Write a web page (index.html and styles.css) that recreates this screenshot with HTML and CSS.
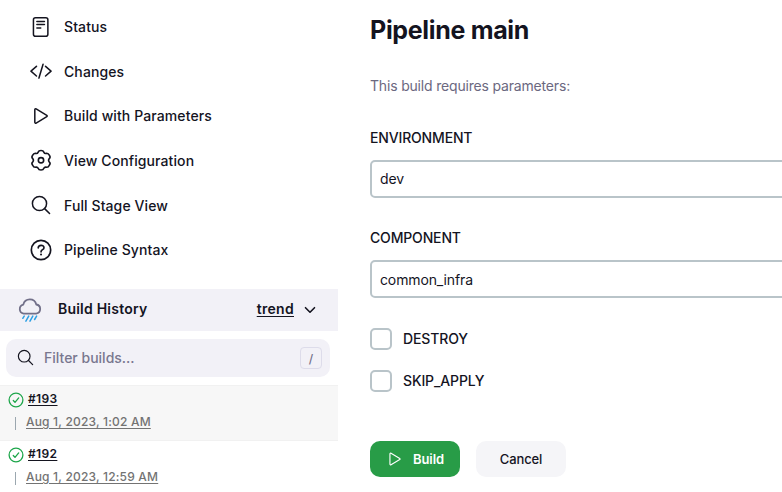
FILE: index.html
```html
<!DOCTYPE html>
<html lang="en">
<head>
<meta charset="utf-8">
<title>Pipeline main</title>
<link rel="stylesheet" href="styles.css">
</head>
<body>
<div class="page">
  <aside class="sidebar">
    <nav class="tasks">
      <a class="task"><svg class="icon" viewBox="0 0 512 512"><rect x="80" y="40" width="336" height="430" rx="48"/><path d="M160 128h176M160 200h176M160 280h90"/></svg><span>Status</span></a>
      <a class="task"><svg class="icon" viewBox="0 0 512 512"><path d="M150 372L22 260l128-112M362 372l128-112-128-112M304 100l-96 320"/></svg><span>Changes</span></a>
      <a class="task"><svg class="icon" viewBox="0 0 512 512"><path d="M112 111v290c0 17.440 17 28.520 31 20.160l247.900-148.370c12.120-7.250 12.120-26.330 0-33.580L143 90.840c-14-8.360-31 2.720-31 20.160z"/></svg><span>Build with Parameters</span></a>
      <a class="task"><svg class="icon gear" viewBox="0 0 512 512"><circle cx="256" cy="262" r="62"/><path d="M256 36Q312 36 320 72Q344 118 390 98Q430 98 450 146Q486 194 446 227Q420 262 446 297Q486 330 450 378Q430 426 390 426Q344 406 320 452Q312 488 256 488Q200 488 192 452Q168 406 122 426Q82 426 62 378Q26 330 66 297Q92 262 66 227Q26 194 62 146Q82 98 122 98Q168 118 192 72Q200 36 256 36z"/></svg><span>View Configuration</span></a>
      <a class="task"><svg class="icon" viewBox="0 0 512 512"><circle cx="221" cy="221" r="165"/><path d="M340 340l115 115"/></svg><span>Full Stage View</span></a>
      <a class="task"><svg class="icon bold" viewBox="0 0 512 512"><circle cx="256" cy="256" r="225"/><path d="M192 205c0-76 133-78 133-4 0 48-68 47-68 98"/><circle class="dot" cx="257" cy="360" r="24"/></svg><span>Pipeline Syntax</span></a>
    </nav>

    <header class="history-head">
      <svg class="weather" viewBox="0 0 24 24"><path class="cloud" d="M5.600 15.600a4.600 4.600 0 0 1-.3-9 6.700 6.700 0 0 1 13-.1 4.600 4.600 0 0 1-.1 9.100z"/><path class="rain" d="M6.200 18.100l-1.400 2.200M10.700 18.100l-2.800 5M14.800 18.100l-2.800 5M18.600 18.100L16.600 21.500"/></svg>
      <strong>Build History</strong>
      <a class="trend">trend</a>
      <svg class="chevron" viewBox="0 0 12 12"><path d="M1.500 3.700l4.500 4.500 4.500-4.500"/></svg>
    </header>

    <div class="search">
      <svg class="search-icon" viewBox="0 0 512 512"><circle cx="221" cy="221" r="157"/><path d="M338 338l110 110"/></svg>
      <span class="hint">Filter builds...</span>
      <kbd>/</kbd>
    </div>

    <ul class="builds">
      <li class="build">
        <div class="build-top"><svg class="ok" viewBox="0 0 16 16"><circle cx="8" cy="8" r="6.900"/><path d="M5.300 8.500l1.700 1.900 3.700-4.500"/></svg><a class="number">#193</a></div>
        <div class="build-time"><a>Aug 1, 2023, 1:02 AM</a></div>
      </li>
      <li class="build">
        <div class="build-top"><svg class="ok" viewBox="0 0 16 16"><circle cx="8" cy="8" r="6.900"/><path d="M5.300 8.500l1.700 1.900 3.700-4.500"/></svg><a class="number">#192</a></div>
        <div class="build-time"><a>Aug 1, 2023, 12:59 AM</a></div>
      </li>
    </ul>
  </aside>

  <main class="main">
    <h1>Pipeline main</h1>
    <p class="intro">This build requires parameters:</p>
    <div class="field">
      <div class="label">ENVIRONMENT</div>
      <div class="input env">dev</div>
    </div>
    <div class="field">
      <div class="label">COMPONENT</div>
      <div class="input">common_infra</div>
    </div>
    <div class="check"><span class="box"></span><span class="check-label">DESTROY</span></div>
    <div class="check"><span class="box"></span><span class="check-label">SKIP_APPLY</span></div>
    <div class="actions">
      <button class="btn primary"><svg class="play" viewBox="0 0 512 512"><path d="M112 111v290c0 17.440 17 28.520 31 20.160l247.900-148.370c12.120-7.250 12.120-26.330 0-33.580L143 90.840c-14-8.360-31 2.720-31 20.160z"/></svg><span>Build</span></button>
      <button class="btn"><span>Cancel</span></button>
    </div>
  </main>
</div>
</body>
</html>
```
FILE: styles.css
```css
* { box-sizing: border-box; }

body {
  margin: 0;
  background: #fff;
  color: #14141f;
  font-family: Inter, "Liberation Sans", sans-serif;
  font-size: 14px;
  overflow: hidden;
}

svg {
  display: block;
  flex: none;
  fill: none;
  stroke: currentColor;
  stroke-linecap: round;
  stroke-linejoin: round;
}

.page {
  display: flex;
  height: 492px;
  overflow: hidden;
}

.sidebar {
  flex: none;
  width: 338px;
}

.tasks {
  display: flex;
  flex-direction: column;
  height: 289px;
  padding-top: 4.400px;
}

.task {
  display: flex;
  align-items: center;
  gap: 13px;
  height: 44.600px;
  padding-left: 30px;
  font-size: 14px;
  font-weight: 500;
  letter-spacing: 0.1px;
}

.icon {
  width: 22px;
  height: 22px;
  margin-right: -1px;
  stroke-width: 35;
}

.bold { stroke-width: 39; }
.gear { stroke-width: 38; }
.dot { fill: currentColor; stroke: none; }

.history-head {
  display: flex;
  align-items: center;
  height: 42px;
  padding: 0 22px 0 18px;
  background: #f2f1f7;
  font-weight: 600;
  letter-spacing: 0.22px;
}

.history-head strong { padding-bottom: 3px; font-weight: 600; }
.weather { width: 24px; height: 24px; margin-right: 16px; }
.cloud { stroke: #727089; stroke-width: 1.800; }
.rain { stroke: #2da0e5; stroke-width: 1.500; }

.trend {
  margin-left: auto;
  padding-bottom: 3px;
  letter-spacing: 0.3px;
  text-decoration: underline;
  text-underline-offset: 2px;
}

.chevron { width: 12px; height: 12px; margin-left: 10px; stroke-width: 1.600; }

.search {
  display: flex;
  align-items: center;
  height: 38px;
  margin: 8px 8px 8px 6px;
  padding: 0 8px 0 10px;
  border-radius: 10px;
  background: #f2f1f7;
}

.search-icon { width: 19px; height: 19px; margin-bottom: 2px; stroke-width: 32; }
.hint { margin-left: 9px; padding-bottom: 2px; color: #79778f; font-weight: 500; }

kbd {
  display: flex;
  align-items: center;
  justify-content: center;
  width: 22px;
  height: 22px;
  margin-left: auto;
  border: 1px solid #dddcea;
  border-radius: 4px;
  color: #727089;
  font: 500 12px Inter, sans-serif;
}

.builds { margin: 0; padding: 0; list-style: none; }

.build {
  height: 55px;
  padding: 5px 0 0 8px;
  border-top: 1px solid #f1f1f1;
  font-size: 12px;
  font-weight: 500;
}

.build:nth-child(odd) { background: #f7f7f7; }
.build-top { display: flex; align-items: center; height: 18px; }
.ok { width: 16px; height: 16px; color: #1ea64b; stroke-width: 1.300; }

.number {
  margin-left: 4px;
  padding-bottom: 3px;
  font-weight: 600;
  letter-spacing: 0.35px;
  text-decoration: underline;
  text-underline-offset: 2px;
}

.build-time {
  height: 13px;
  margin: 8px 0 0 7px;
  padding-left: 10px;
  border-left: 1px solid #9ba7af;
  color: #737373;
  letter-spacing: 0.19px;
  line-height: 9px;
}

.build-time a { text-decoration: underline; text-underline-offset: 2px; }

.main {
  flex: none;
  width: 500px;
  padding-left: 32px;
}

h1 {
  margin: 14px 0 0;
  font-size: 25px;
  font-weight: 700;
  letter-spacing: -0.32px;
  line-height: 32px;
}

.intro {
  margin: 30px 0 0;
  color: #6b6880;
  letter-spacing: -0.18px;
  line-height: 20px;
}

.field { height: 100px; }
.intro + .field { margin-top: 32px; }
.label { height: 32px; font-weight: 500; letter-spacing: -0.16px; line-height: 20px; }

.input {
  height: 38px;
  padding-left: 8px;
  border: 2px solid #b9c4c9;
  border-radius: 5px;
  letter-spacing: -0.13px;
  line-height: 35px;
}

.env { line-height: 33px; }

.check {
  display: flex;
  align-items: center;
  gap: 11px;
  height: 22px;
  margin-bottom: 20px;
  font-weight: 500;
  letter-spacing: -0.13px;
}

.check-label { padding-bottom: 1px; }

.box {
  width: 22px;
  height: 22px;
  border: 2px solid #b9c4c9;
  border-radius: 5px;
}

.actions { display: flex; gap: 16px; margin-top: 49px; }

.btn {
  display: flex;
  align-items: center;
  justify-content: center;
  width: 90px;
  height: 36px;
  padding: 0;
  border: 0;
  border-radius: 10px;
  background: #f5f5f8;
  color: #14141f;
  font: 500 13px Inter, sans-serif;
  letter-spacing: -0.1px;
}

.primary { background: #289c47; color: #fff; font-weight: 600; }
.play { width: 18px; height: 18px; margin-right: 9px; stroke-width: 32; }
```
